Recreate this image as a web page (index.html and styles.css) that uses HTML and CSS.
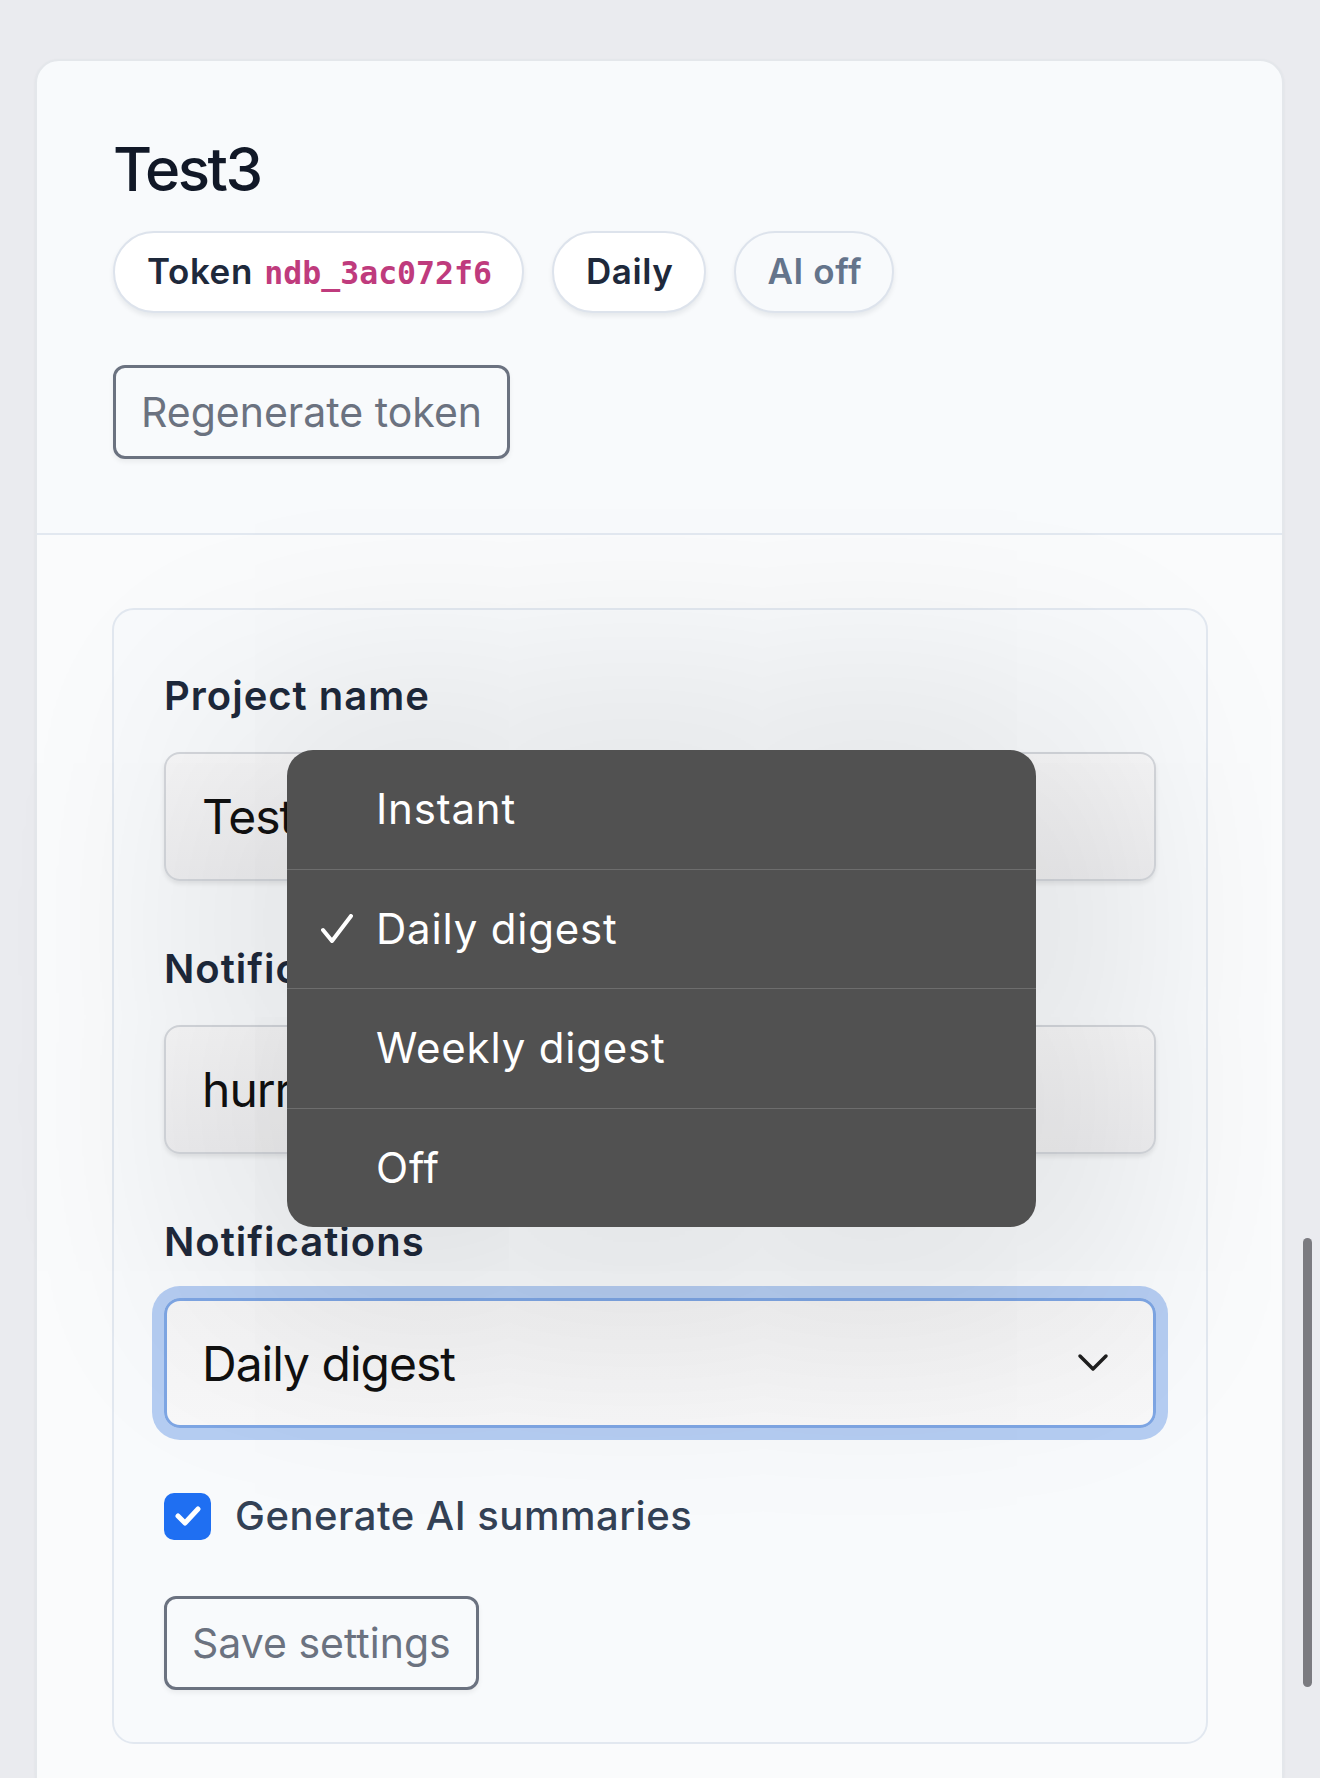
FILE: index.html
```html
<!DOCTYPE html>
<html lang="en">
  <head>
    <meta charset="UTF-8" />
    <meta name="viewport" content="width=device-width, initial-scale=1.0" />
    <link rel="stylesheet" href="styles.css">
  </head>
  <body>
    <main class="page">
      <section class="project-card">
        <header class="project-head">
          <h1 class="project-title">Test3</h1>
          <div class="pills">
            <span class="pill">Token <code class="token">ndb_3ac072f6</code></span>
            <span class="pill">Daily</span>
            <span class="pill pill-muted">AI off</span>
          </div>
          <button class="btn-outline" type="button">Regenerate token</button>
        </header>

        <div class="project-body">
          <form class="settings">
            <div class="field">
              <label class="field-label" for="name">Project name</label>
              <input class="field-input" id="name" type="text" value="Test3" />
            </div>
            <div class="field">
              <label class="field-label" for="email">Notification email</label>
              <input class="field-input" id="email" type="text" value="hurrdev@example.com" />
            </div>
            <div class="field">
              <label class="field-label">Notifications</label>
              <div class="select is-focused">
                <span>Daily digest</span>
                <svg class="chevron" width="32" height="20" viewBox="0 0 32 20">
                  <path d="M3 3 L16 16 L29 3" fill="none" stroke="#1f1f1f" stroke-width="3.5" stroke-linecap="round" stroke-linejoin="round" />
                </svg>
              </div>
            </div>

            <label class="check-row">
              <span class="check-box">
                <svg width="26" height="20" viewBox="0 0 26 20">
                  <path d="M3 10 L10 17 L23 3" fill="none" stroke="#fff" stroke-width="5" stroke-linecap="round" stroke-linejoin="round" />
                </svg>
              </span>
              Generate AI summaries
            </label>

            <button class="btn-outline" type="button">Save settings</button>

            <!-- native picker, open -->
            <ul class="select-menu">
              <li class="menu-item">Instant</li>
              <li class="menu-item is-selected">
                <svg class="menu-check" width="32" height="30" viewBox="0 0 32 30">
                  <path d="M2 16 L11 27 L30 2" fill="none" stroke="#fff" stroke-width="4" stroke-linecap="round" stroke-linejoin="round" />
                </svg>
                Daily digest
              </li>
              <li class="menu-item">Weekly digest</li>
              <li class="menu-item">Off</li>
            </ul>
          </form>
        </div>
      </section>
    </main>
    <div class="scroll-thumb"></div>
  </body>
</html>
```

FILE: styles.css
```css
body {
  margin: 0;
  height: 1778px;
  overflow: hidden;
  background-color: #eaebef;
  font-family: Inter, "Noto Sans", sans-serif;
  color: #0f172a;
}

.page {
  padding: 59px 36px 0 35px;
}

.project-card {
  background-color: #f8fafc;
  border: 2px solid #e4e7eb;
  border-radius: 24px;
  box-shadow: 0 1px 3px rgba(0, 0, 0, 0.05);
}

.project-head {
  padding: 72px 76px 74px;
  border-bottom: 2px solid #e2e8f0;
}

.project-title {
  margin: 0 0 26px;
  font-size: 60px;
  line-height: 72px;
  font-weight: 500;
  letter-spacing: -2.5px;
  color: #111827;
}

.pills {
  display: flex;
  gap: 28px;
  margin-bottom: 52px;
}

.pill {
  padding: 18px 30px 18px 32px;
  font-size: 35px;
  line-height: 40px;
  font-weight: 600;
  letter-spacing: 0.6px;
  color: #1e293b;
  background-color: #fff;
  border: 2px solid #dde3ec;
  border-radius: 999px;
  box-shadow: 0 3px 5px rgba(15, 23, 42, 0.08);
}

.pill-muted {
  color: #64748b;
  background-color: #f8fafc;
}

.token {
  margin-left: 2px;
  font-family: "DejaVu Sans Mono", monospace;
  font-size: 31.5px;
  font-weight: 700;
  letter-spacing: 0;
  color: #bf3b7d;
}

.btn-outline {
  display: block;
  height: 94px;
  padding: 0 25px;
  font-family: inherit;
  font-size: 41px;
  font-weight: 400;
  color: #6b7280;
  background-color: #f8fafc;
  border: 3px solid #6b7280;
  border-radius: 12px;
  box-shadow: 0 3px 5px rgba(0, 0, 0, 0.06);
}

.project-body {
  padding: 73px 74px 50px 75px;
  background-color: #fafbfc;
}

.settings {
  position: relative;
  padding: 61px 50px 52px;
  background-color: #f8fafc;
  border: 2px solid #e2e8f0;
  border-radius: 22px;
}

.field {
  margin-bottom: 63px;
}

.field-label {
  display: block;
  margin-bottom: 31px;
  font-size: 40px;
  line-height: 50px;
  font-weight: 600;
  letter-spacing: 1px;
  color: #1e293b;
}

.field-input,
.select {
  box-sizing: border-box;
  width: 100%;
  height: 129px;
  padding: 0 36px;
  font-family: inherit;
  font-size: 48px;
  letter-spacing: -1px;
  color: #111;
  background: linear-gradient(#f7f7f8, #efeff1);
  border: 2px solid #d4d7dc;
  border-radius: 16px;
  box-shadow: 0 3px 4px rgba(0, 0, 0, 0.08);
}

.select {
  display: flex;
  align-items: center;
  justify-content: space-between;
  height: 130px;
  padding: 0 44px 0 35px;
  background: linear-gradient(#f5f5f6, #f8f8f9);
}

.select.is-focused {
  border: 3px solid #7ea6e4;
  box-shadow: 0 0 0 12px #b5cdf2;
}

.check-row {
  display: flex;
  align-items: center;
  gap: 24px;
  margin-top: 56px;
  margin-bottom: 55px;
  font-size: 40px;
  line-height: 50px;
  font-weight: 500;
  letter-spacing: 0.5px;
  color: #334155;
}

.check-box {
  display: flex;
  align-items: center;
  justify-content: center;
  width: 47px;
  height: 47px;
  background-color: #1f6ff2;
  border-radius: 10px;
}

.select-menu {
  position: absolute;
  top: 140px;
  left: 173px;
  width: 749px;
  margin: 0;
  padding: 0;
  list-style: none;
  background-color: #515151;
  border-radius: 26px;
  box-shadow: 0 20px 220px 80px rgba(0, 0, 0, 0.1);
  overflow: hidden;
}

.menu-item {
  position: relative;
  height: 118.5px;
  padding-left: 89px;
  font-size: 42px;
  line-height: 118.5px;
  letter-spacing: 0.8px;
  color: #fff;
  border-top: 1px solid rgba(255, 255, 255, 0.16);
}

.menu-item:first-child {
  border-top: none;
}

.menu-check {
  position: absolute;
  left: 34px;
  top: 44px;
}

.scroll-thumb {
  position: fixed;
  top: 1238px;
  right: 8px;
  width: 9px;
  height: 449px;
  background-color: #7b7b80;
  border-radius: 5px;
}
```
